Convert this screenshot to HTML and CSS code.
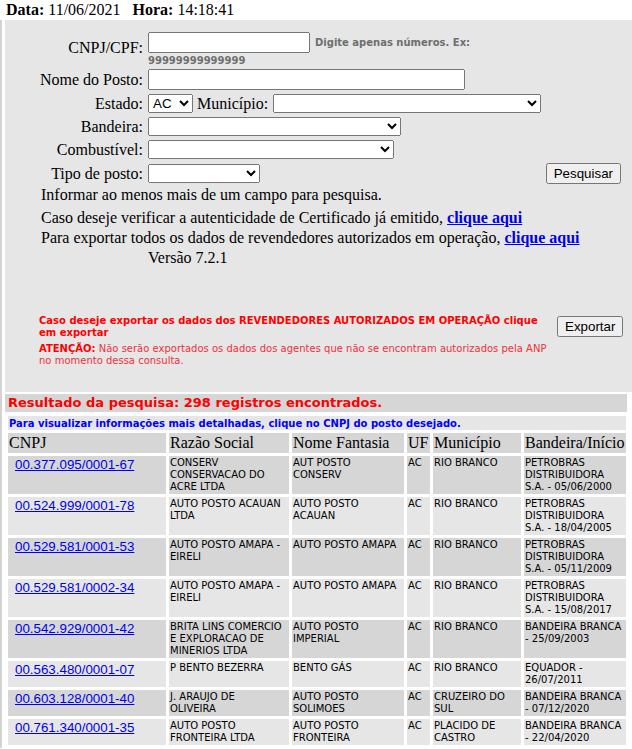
FILE: index.html
```html
<!DOCTYPE html>
<html lang="pt-BR">
<head>
<meta charset="utf-8">
<title>Consulta de Postos</title>
<link rel="stylesheet" href="styles.css">
</head>
<body>
<div class="topline"><b>Data:</b> 11/06/2021&nbsp;&nbsp; <b>Hora:</b> 14:18:41</div>
<div class="main">
  <form class="panel">
    <div class="row r-cnpj">
      <label class="lbl lbl-cnpj">CNPJ/CPF:</label>
      <div class="ctl ctl-cnpj">
        <div class="cnpj-line"><input type="text" class="in-cnpj"><span class="hint">Digite apenas números. Ex:</span></div>
        <div class="hint hint2">99999999999999</div>
      </div>
    </div>
    <div class="row r-nome">
      <label class="lbl">Nome do Posto:</label>
      <div class="ctl"><input type="text" class="in-nome"></div>
    </div>
    <div class="row r-estado">
      <label class="lbl">Estado:</label>
      <div class="ctl">
        <select class="sel-uf"><option>AC</option></select>
        <span class="mun-lbl">Município:</span>
        <select class="sel-mun"><option></option></select>
      </div>
    </div>
    <div class="row r-band">
      <label class="lbl">Bandeira:</label>
      <div class="ctl"><select class="sel-band"><option></option></select></div>
    </div>
    <div class="row r-comb">
      <label class="lbl">Combustível:</label>
      <div class="ctl"><select class="sel-comb"><option></option></select></div>
    </div>
    <div class="row r-tipo">
      <label class="lbl">Tipo de posto:</label>
      <div class="ctl ctl-tipo">
        <select class="sel-tipo"><option></option></select>
        <button type="button" class="btn btn-pesq">Pesquisar</button>
      </div>
    </div>
    <p class="note n1">Informar ao menos mais de um campo para pesquisa.</p>
    <p class="note n2">Caso deseje verificar a autenticidade de Certificado já emitido, <a href="#" class="blink">clique aqui</a></p>
    <p class="note n3">Para exportar todos os dados de revendedores autorizados em operação, <a href="#" class="blink">clique aqui</a></p>
    <p class="versao">Versão 7.2.1</p>
    <div class="export">
      <div class="export-text">
        <p class="exp-red">Caso deseje exportar os dados dos REVENDEDORES AUTORIZADOS EM OPERAÇÃO clique em exportar</p>
        <p class="exp-warn"><b>ATENÇÃO:</b> Não serão exportados os dados dos agentes que não se encontram autorizados pela ANP no momento dessa consulta.</p>
      </div>
      <button type="button" class="btn btn-exp">Exportar</button>
    </div>
  </form>
  <div class="result-bar">Resultado da pesquisa: 298 registros encontrados.</div>
  <table class="results">
    <colgroup>
      <col class="c1"><col class="c2"><col class="c3"><col class="c4"><col class="c5"><col class="c6">
    </colgroup>
    <tr><td colspan="6" class="tip">Para visualizar informações mais detalhadas, clique no CNPJ do posto desejado.</td></tr>
    <tr class="head"><th>CNPJ</th><th>Razão Social</th><th>Nome Fantasia</th><th>UF</th><th>Município</th><th>Bandeira/Início</th></tr>
    <tr class="dark">
      <td class="cnpj"><a href="#">00.377.095/0001-67</a></td>
      <td>CONSERV<br>CONSERVACAO DO<br>ACRE LTDA</td>
      <td>AUT POSTO<br>CONSERV</td>
      <td>AC</td>
      <td>RIO BRANCO</td>
      <td>PETROBRAS<br>DISTRIBUIDORA<br>S.A. - 05/06/2000</td>
    </tr>
    <tr class="light">
      <td class="cnpj"><a href="#">00.524.999/0001-78</a></td>
      <td>AUTO POSTO ACAUAN<br>LTDA</td>
      <td>AUTO POSTO<br>ACAUAN</td>
      <td>AC</td>
      <td>RIO BRANCO</td>
      <td>PETROBRAS<br>DISTRIBUIDORA<br>S.A. - 18/04/2005</td>
    </tr>
    <tr class="dark">
      <td class="cnpj"><a href="#">00.529.581/0001-53</a></td>
      <td>AUTO POSTO AMAPA -<br>EIRELI</td>
      <td>AUTO POSTO AMAPA</td>
      <td>AC</td>
      <td>RIO BRANCO</td>
      <td>PETROBRAS<br>DISTRIBUIDORA<br>S.A. - 05/11/2009</td>
    </tr>
    <tr class="light">
      <td class="cnpj"><a href="#">00.529.581/0002-34</a></td>
      <td>AUTO POSTO AMAPA -<br>EIRELI</td>
      <td>AUTO POSTO AMAPA</td>
      <td>AC</td>
      <td>RIO BRANCO</td>
      <td>PETROBRAS<br>DISTRIBUIDORA<br>S.A. - 15/08/2017</td>
    </tr>
    <tr class="dark">
      <td class="cnpj"><a href="#">00.542.929/0001-42</a></td>
      <td>BRITA LINS COMERCIO<br>E EXPLORACAO DE<br>MINERIOS LTDA</td>
      <td>AUTO POSTO<br>IMPERIAL</td>
      <td>AC</td>
      <td>RIO BRANCO</td>
      <td>BANDEIRA BRANCA<br>- 25/09/2003</td>
    </tr>
    <tr class="light">
      <td class="cnpj"><a href="#">00.563.480/0001-07</a></td>
      <td>P BENTO BEZERRA</td>
      <td>BENTO GÁS</td>
      <td>AC</td>
      <td>RIO BRANCO</td>
      <td>EQUADOR -<br>26/07/2011</td>
    </tr>
    <tr class="dark">
      <td class="cnpj"><a href="#">00.603.128/0001-40</a></td>
      <td>J. ARAUJO DE<br>OLIVEIRA</td>
      <td>AUTO POSTO<br>SOLIMOES</td>
      <td>AC</td>
      <td>CRUZEIRO DO<br>SUL</td>
      <td>BANDEIRA BRANCA<br>- 07/12/2020</td>
    </tr>
    <tr class="light">
      <td class="cnpj"><a href="#">00.761.340/0001-35</a></td>
      <td>AUTO POSTO<br>FRONTEIRA LTDA</td>
      <td>AUTO POSTO<br>FRONTEIRA</td>
      <td>AC</td>
      <td>PLACIDO DE<br>CASTRO</td>
      <td>BANDEIRA BRANCA<br>- 22/04/2020</td>
    </tr>
  </table>
</div>
</body>
</html>
```

FILE: styles.css
```css
html, body {
  margin: 0;
  padding: 0;
  background: #fff;
}
body {
  font-family: "Liberation Serif", "Times New Roman", serif;
  font-size: 16px;
  line-height: 18px;
  color: #000;
}
p { margin: 0; }

.topline {
  height: 20px;
  padding: 1px 0 0 6px;
  box-sizing: border-box;
}

.main {
  border-left: 2px solid #d3d3d3;
  padding-left: 3px;
}

.panel {
  display: block;
  margin: 0;
  background: #e6e6e6;
  padding: 12px 0 25px 0;
}

.row {
  display: flex;
  align-items: center;
}
.lbl {
  flex: none;
  width: 138px;
  text-align: right;
  line-height: 18px;
}
.ctl {
  margin-left: 5px;
  display: flex;
  align-items: center;
}

input, select, button {
  font-family: "Liberation Sans", Arial, sans-serif;
  font-size: 13.333px;
  margin: 0;
}
input {
  box-sizing: border-box;
  height: 21px;
}

.r-cnpj { height: 35px; align-items: flex-start; }
.lbl-cnpj { margin-top: 7px; }
.ctl-cnpj { display: block; }
.cnpj-line {
  display: flex;
  align-items: center;
  height: 21px;
}
.in-cnpj { width: 162px; }
.hint {
  font-family: "DejaVu Sans", Verdana, sans-serif;
  font-size: 10px;
  font-weight: bold;
  line-height: 12px;
  color: #6e6e6e;
}
.cnpj-line .hint { margin-left: 5px; }
.hint2 { margin-top: 2px; }

.r-nome { margin-top: 2px; height: 21px; }
.in-nome { width: 317px; }

select {
  box-sizing: border-box;
  height: 19px;
}
.r-estado { margin-top: 4px; height: 19px; }
.sel-uf { width: 45px; }
.mun-lbl { margin: 0 5px 0 4px; }
.sel-mun { width: 268px; }

.r-band { margin-top: 4px; height: 19px; }
.sel-band { width: 253px; }
.r-comb { margin-top: 4px; height: 19px; }
.sel-comb { width: 246px; }

.r-tipo { margin-top: 4px; height: 21px; }
.ctl-tipo { width: 473px; }
.sel-tipo { width: 112px; }
.btn-pesq { margin-left: auto; }

.btn {
  height: 21px;
  padding: 1px 6px;
}

.note { padding-left: 36px; }
.n1 { margin-top: 2px; }
.n2 { margin-top: 5px; }
.n3 { margin-top: 2px; }
.blink {
  color: #0000ee;
  font-weight: bold;
}
.versao {
  margin-top: 2px;
  padding-left: 143px;
}

.export {
  display: flex;
  align-items: flex-start;
  margin-top: 48px;
  padding-left: 34px;
}
.export-text {
  width: 513px;
  font-family: "DejaVu Sans", Verdana, sans-serif;
  font-size: 10px;
  line-height: 12px;
  color: #ff0000;
}
.exp-red { font-weight: bold; }
.exp-warn { margin-top: 4px; color: #f0303a; }
.exp-warn b { color: #ff0000; }
.btn-exp { margin: 1px 0 0 5px; }

.result-bar {
  margin-top: 2px;
  width: 622px;
  height: 18px;
  box-sizing: border-box;
  padding: 1px 0 0 3px;
  background: #d6d6d6;
  font-family: "DejaVu Sans", Verdana, sans-serif;
  font-size: 13px;
  font-weight: bold;
  line-height: 16px;
  color: #ff0000;
}

.results {
  margin-top: 1px;
  width: 624px;
  table-layout: fixed;
  border-collapse: separate;
  border-spacing: 3px;
  font-family: "DejaVu Sans", Verdana, sans-serif;
  font-size: 10px;
  line-height: 12px;
  color: #000;
}
.c1 { width: 158px; }
.c2 { width: 120px; }
.c3 { width: 112px; }
.c4 { width: 23px; }
.c5 { width: 88px; }
.c6 { width: 102px; }

.results td, .results th {
  padding: 1px;
  vertical-align: top;
  text-align: left;
  white-space: nowrap;
  overflow: hidden;
}
.results .tip {
  background: #e6e6e6;
  color: #0000ff;
  font-weight: bold;
  padding-top: 2px;
  padding-bottom: 0;
}
.results th {
  background: #d6d6d6;
  font-family: "Liberation Serif", "Times New Roman", serif;
  font-size: 16px;
  font-weight: normal;
  line-height: 18px;
}
.dark td { background: #d6d6d6; }
.light td { background: #e6e6e6; }
.results td.cnpj {
  padding-left: 7px;
  font-family: "Liberation Sans", Arial, sans-serif;
  font-size: 13.333px;
  line-height: normal;
}
.cnpj a { color: #0000ee; }
```
